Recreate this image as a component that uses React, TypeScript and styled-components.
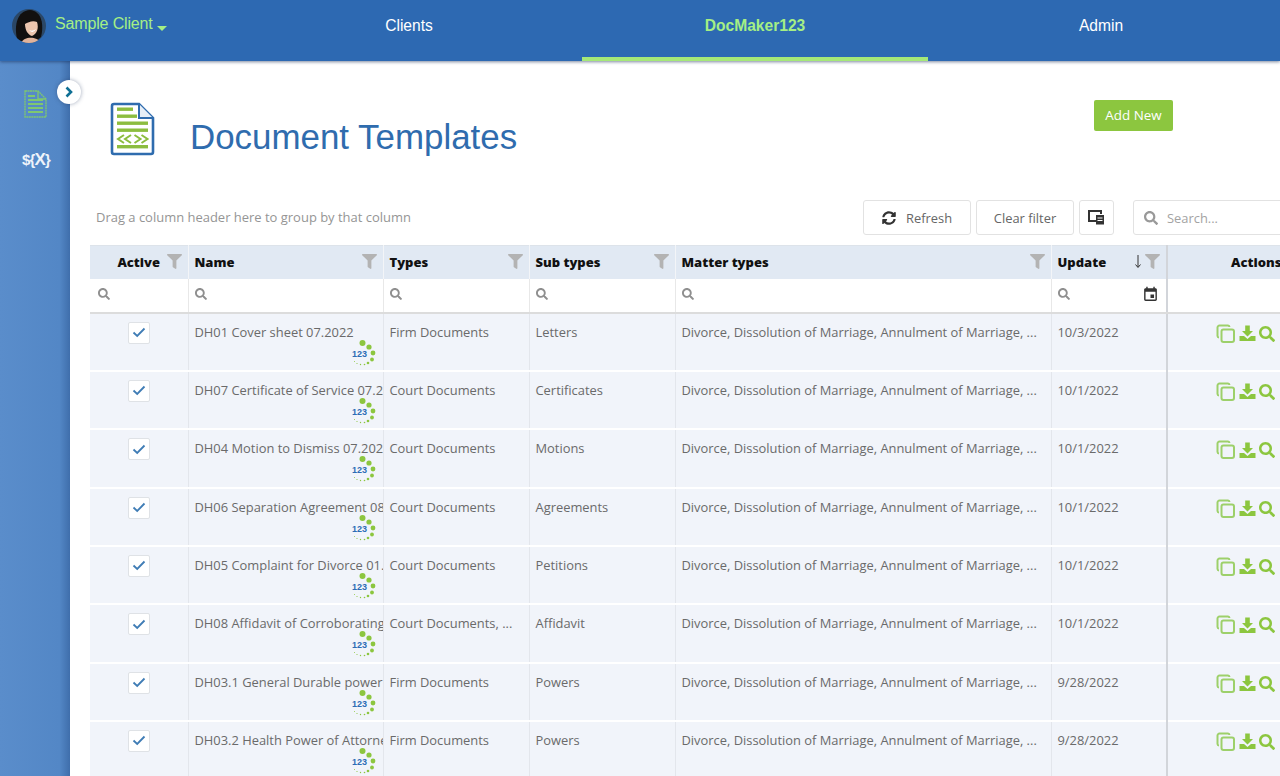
import React from 'react';
import styled, { createGlobalStyle } from 'styled-components';
import { FaFilter, FaSearch, FaSyncAlt } from 'react-icons/fa';
import { MdEvent } from 'react-icons/md';

const Global = createGlobalStyle`
  html, body { margin: 0; padding: 0; height: 100%; overflow: hidden; background: #fff; }
  #root { height: 100%; }
  * { box-sizing: border-box; }
`;

const Page = styled.div`
  width: 1280px; height: 776px; display: flex; flex-direction: column; overflow: hidden;
  font-family: "Open Sans", "Noto Sans", sans-serif; color: #666;
`;
const TopBar = styled.header`
  height: 61px; flex: none; background: #2d69b2; display: flex; position: relative; z-index: 2;
  box-shadow: 0 1px 3px rgba(20, 40, 80, .55);
`;
const Brand = styled.div`
  width: 236px; flex: none; display: flex; align-items: flex-start; padding: 9px 0 0 12px; gap: 9px;
`;
const ClientName = styled.div`
  font: 16px/30px "Liberation Sans", Arial, sans-serif; color: #a5ef85; display: flex; letter-spacing: -.15px;
`;
const Caret = styled.span`
  width: 0; height: 0; margin: 17px 0 0 4px; border: 5px solid transparent; border-bottom: 0; border-top-color: #a5ef85;
`;
const Tab = styled.div<{ $active?: boolean }>`
  width: 346px; flex: none; text-align: center; padding-top: 15px; height: 61px;
  font: ${p => (p.$active ? 700 : 400)} 15.6px/21px "Liberation Sans", Arial, sans-serif;
  color: ${p => (p.$active ? '#a5ef85' : '#fff')};
  border-bottom: 4px solid ${p => (p.$active ? '#a5e878' : 'transparent')};
`;
const Body = styled.div`
  flex: 1; display: flex; min-height: 0; position: relative;
`;
const Sidebar = styled.aside`
  width: 70px; flex: none; display: flex; flex-direction: column; align-items: center; padding-top: 29px; gap: 32px;
  background: linear-gradient(90deg, #5a8dcb 0%, #5387c6 85%, #3f6eab 100%);
`;
const VarsLabel = styled.div`
  font: 700 15px/20px "Liberation Sans", Arial, sans-serif; color: #eef3fa; letter-spacing: -.9px; margin-left: 2px;
  b { font-size: 17px; }
`;
const Toggle = styled.button`
  position: absolute; left: 57px; top: 19px; width: 24px; height: 24px; border-radius: 50%; border: 0; padding: 0;
  background: #fff; box-shadow: 0 0 4px rgba(40, 60, 100, .45); display: flex; align-items: center; justify-content: center;
`;
const Main = styled.main`
  flex: 1; min-width: 0; overflow: hidden; padding: 0 0 0 20px;
`;
const TitleRow = styled.div`
  height: 139px; display: flex; padding: 41px 107px 0 20px;
`;
const Title = styled.h1`
  margin: 15px 0 0 35px; font: 400 34.9px/40px "Liberation Sans", Arial, sans-serif; color: #2f6cae; flex: 1;
`;
const AddNew = styled.button`
  height: 31px; width: 79px; border: 0; border-radius: 2px; background: #8cc63f; color: #fff;
  font: 400 13.4px/31px "Open Sans", sans-serif; padding: 0; margin-top: -2px;
`;
const Toolbar = styled.div`
  height: 45px; display: flex; align-items: flex-start; width: 1240px;
`;
const GroupHint = styled.div`
  font-size: 12.98px; line-height: 35px; color: #959595; margin-left: 6px; width: 767px; flex: none;
`;
const ToolButton = styled.button<{ $w: number }>`
  width: ${p => p.$w}px; flex: none; height: 35px; margin-right: 5px; background: #fff; border: 1px solid #e2e2e2; border-radius: 3px;
  font: 400 12.9px "Open Sans", sans-serif; color: #666; display: flex; align-items: center; justify-content: center; gap: 10px; padding: 0;
`;
const SearchBox = styled.div`
  width: 200px; flex: none; height: 35px; margin-left: 14px; background: #fff; border: 1px solid #e2e2e2; border-radius: 3px;
  display: flex; align-items: center; gap: 9px; padding-left: 10px; font-size: 12.9px; color: #a3a3a3;
`;
const Table = styled.table`
  table-layout: fixed; width: 1255px; border-collapse: collapse; border-spacing: 0;
  font-size: 12.9px;
`;
const HeadCell = styled.th<{ $center?: boolean; $fixed?: boolean }>`
  height: 33px; background: #e1e9f3; padding: 0 6px; position: relative; color: #111; font-weight: 800; font-size: 13px;
  text-align: ${p => (p.$center ? 'center' : 'left')};
  border-right: 1px solid #f3f5f8; border-top: 1px solid #dde3ea;
  border-left: ${p => (p.$fixed ? '2px solid #d2d5da' : '0')};
`;
const HeadFilter = styled.span<{ $right?: number }>`
  position: absolute; right: ${p => p.$right ?? 6}px; top: 8px; color: #b3b3b3; display: flex;
`;
const SortMark = styled.span`
  position: absolute; right: 24px; top: 8px; display: flex; color: #333;
`;
const FilterCell = styled.td<{ $fixed?: boolean; $first?: boolean }>`
  height: 34px; padding: 0 6px 0 ${p => (p.$first ? 8 : 6)}px; background: #fff; position: relative; color: #8a8a8a;
  border-right: 1px solid #e8e8e8; border-bottom: 2px solid #dcdcdc;
  border-left: ${p => (p.$fixed ? '2px solid #d2d5da' : '0')};
`;
const FilterIcon = styled.span`
  display: flex; margin-top: -2px; color: #8f8f8f;
`;
const CalendarIcon = styled.span`
  position: absolute; right: 7px; top: 7px; display: flex; color: #333;
`;
const Row = styled.tr`
  height: 58.35px; background: #f1f4fa; border-bottom: 2px solid #fff;
`;
const Cell = styled.td<{ $fixed?: boolean; $clip?: boolean }>`
  padding: 9px 6px 0; vertical-align: top; line-height: 18px; position: relative; color: #6a6a6a;
  white-space: nowrap; overflow: hidden; text-overflow: ${p => (p.$clip ? 'clip' : 'ellipsis')};
  border-right: 1px solid #e3e6ec;
  border-left: ${p => (p.$fixed ? '2px solid #d2d5da' : '0')};
`;
const CheckCell = styled(Cell)`
  padding: 8px 0 0; text-align: center;
`;
const CheckBox = styled.span`
  display: inline-flex; width: 22px; height: 22px; background: #fff; border: 1px solid #dfe2e6; border-radius: 2px;
  align-items: center; justify-content: center;
`;
const LogoMark = styled.svg`
  position: absolute; right: 6px; top: 26px; width: 25px; height: 26px;
`;
const Actions = styled.div`
  display: flex; align-items: center; gap: 3px; padding-left: 42px; margin-top: 1px; color: #8cc63f;
`;

const LogoBadge = () => (
  <LogoMark viewBox="0 0 25 26">
    <text x="0" y="16.5" fontFamily="Liberation Sans" fontWeight="700" fontSize="9" fill="#2d6db5">123</text>
    <g fill="#8cc63f">
      <circle cx="10.5" cy="3" r="3" />
      <circle cx="17" cy="7" r="2.6" />
      <circle cx="21" cy="13" r="2.4" />
      <circle cx="20" cy="19.5" r="1.9" />
      <circle cx="16" cy="23" r="1.3" />
      <circle cx="12.5" cy="24.5" r=".8" />
      <circle cx="8.5" cy="24.5" r=".7" />
      <circle cx="5" cy="23.5" r=".6" />
      <circle cx="2.5" cy="21.5" r=".5" />
    </g>
  </LogoMark>
);

const CopyIcon = () => (
  <svg width="20" height="20" viewBox="0 0 20 20" fill="none" stroke="#9dd06a" strokeWidth="2">
    <rect x="5.5" y="5.5" width="12.5" height="12.5" rx="2" fill="#f1f4fa" />
    <path d="M3 13.5 A1.6 1.6 0 0 1 1.5 12 V3.5 A2 2 0 0 1 3.5 1.5 H12 A1.6 1.6 0 0 1 13.5 3" />
  </svg>
);
const DownloadIcon = () => (
  <svg width="17" height="17" viewBox="0 0 17 17" fill="#8cc63f">
    <path d="M6.2 0.5 H10.8 V6 H14 L8.5 11.5 L3 6 H6.2 Z" />
    <path d="M0.5 11 H5 L8.5 14 L12 11 H16.5 V16 H0.5 Z" />
  </svg>
);

const rows = [
  ['DH01 Cover sheet 07.2022', 'Firm Documents', 'Letters', '10/3/2022'],
  ['DH07 Certificate of Service 07.2022', 'Court Documents', 'Certificates', '10/1/2022'],
  ['DH04 Motion to Dismiss 07.2022', 'Court Documents', 'Motions', '10/1/2022'],
  ['DH06 Separation Agreement 08.2022', 'Court Documents', 'Agreements', '10/1/2022'],
  ['DH05 Complaint for Divorce 01.2022', 'Court Documents', 'Petitions', '10/1/2022'],
  ['DH08 Affidavit of Corroborating Witness', 'Court Documents, ...', 'Affidavit', '10/1/2022'],
  ['DH03.1 General Durable power of attorney', 'Firm Documents', 'Powers', '9/28/2022'],
  ['DH03.2 Health Power of Attorney', 'Firm Documents', 'Powers', '9/28/2022'],
];
const matter = 'Divorce, Dissolution of Marriage, Annulment of Marriage, ...';

const heads = ['Name', 'Types', 'Sub types', 'Matter types'];

export default function App() {
  return (
    <Page>
      <Global />
      <TopBar>
        <Brand>
          <svg width="34" height="34" viewBox="0 0 34 34">
            <defs><clipPath id="av"><circle cx="17" cy="17" r="17" /></clipPath></defs>
            <g clipPath="url(#av)">
              <rect width="34" height="34" fill="#2b4766" />
              <path d="M5 30 C2 16 5 2 18 1 C30 2 32 16 29 28 L24 32 H8 Z" fill="#12100f" />
              <path d="M13 15 C16 13 21 11 25 13 C27 19 25 25 20 27 C16 26 13 21 13 15 Z" fill="#ecc5ae" />
              <path d="M9 34 C12 27 25 27 29 34 Z" fill="#e0b39b" />
              <path d="M17 21 Q20.5 23 24 20 Q21 25.5 17 21 Z" fill="#fff" />
            </g>
          </svg>
          <ClientName>Sample Client<Caret /></ClientName>
        </Brand>
        <Tab>Clients</Tab>
        <Tab $active>DocMaker123</Tab>
        <Tab>Admin</Tab>
      </TopBar>
      <Body>
        <Sidebar>
          <svg width="23" height="28" viewBox="0 0 23 28" fill="none" stroke="#7fc86f" strokeWidth="1.3">
            <path d="M1 1 H14 L22 9 V27 H1 Z" strokeDasharray="2 .5" />
            <path d="M14 1 V9 H22" />
            <path d="M4 6 H11 M4 10 H19 M4 14 H19 M4 18 H19 M4 22 H19" strokeWidth="2" />
          </svg>
          <VarsLabel>{'${'}<b>X</b>{'}'}</VarsLabel>
        </Sidebar>
        <Toggle aria-label="Expand">
          <svg width="12" height="12" viewBox="0 0 12 12" fill="none" stroke="#0f6f94" strokeWidth="2.6">
            <path d="M3.5 1.5 L8 6 L3.5 10.5" />
          </svg>
        </Toggle>
        <Main>
          <TitleRow>
            <svg width="45" height="54" viewBox="0 0 45 54" fill="none">
              <path d="M2 4 A2 2 0 0 1 4 2 H29 L43 16 V50 A2 2 0 0 1 41 52 H4 A2 2 0 0 1 2 50 Z" stroke="#2f6cae" strokeWidth="2.6" fill="#fff" />
              <path d="M29 2 V16 H43" stroke="#2f6cae" strokeWidth="2" fill="#e6eef7" />
              <g fill="#8cbd3f">
                <rect x="7" y="5.5" width="16" height="3.4" />
                <rect x="7" y="12.5" width="20" height="3.4" />
                <rect x="7" y="19.5" width="31" height="3.4" />
                <rect x="7" y="26.5" width="31" height="3.4" />
                <rect x="7" y="43" width="31" height="3.4" />
              </g>
              <path d="M14 33 L8 37 L14 41 M21 33 L15 37 L21 41 M24.5 33 L30.5 37 L24.5 41 M31.5 33 L37.5 37 L31.5 41" stroke="#8cbd3f" strokeWidth="2" />
            </svg>
            <Title>Document Templates</Title>
            <AddNew>Add New</AddNew>
          </TitleRow>
          <Toolbar>
            <GroupHint>Drag a column header here to group by that column</GroupHint>
            <ToolButton $w={108}><FaSyncAlt size={14} color="#333" />Refresh</ToolButton>
            <ToolButton $w={98}>Clear filter</ToolButton>
            <ToolButton $w={35}>
              <svg width="17" height="15" viewBox="0 0 17 15" fill="none" stroke="#333" strokeWidth="2">
                <path d="M8 11 H1 V1 H13 V4" />
                <rect x="8" y="5" width="8" height="9.5" fill="#333" stroke="none" />
                <path d="M9.5 8 H14.5 M9.5 10.5 H14.5" stroke="#fff" strokeWidth="1" />
              </svg>
            </ToolButton>
            <SearchBox><FaSearch size={14} color="#999" />Search...</SearchBox>
          </Toolbar>
          <Table>
            <colgroup>
              <col width="98" /><col width="195" /><col width="146" /><col width="146" />
              <col width="376" /><col width="116" /><col width="178" />
            </colgroup>
            <thead>
              <tr>
                <HeadCell $center>Active<HeadFilter><FaFilter size={15} /></HeadFilter></HeadCell>
                {heads.map(h => (
                  <HeadCell key={h}>{h}<HeadFilter><FaFilter size={15} /></HeadFilter></HeadCell>
                ))}
                <HeadCell>
                  Update
                  <SortMark>
                    <svg width="8" height="15" viewBox="0 0 8 15" fill="none" stroke="#333" strokeWidth="1">
                      <path d="M4 1 V13 M1.5 10.5 L4 13.5 L6.5 10.5" />
                    </svg>
                  </SortMark>
                  <HeadFilter><FaFilter size={15} /></HeadFilter>
                </HeadCell>
                <HeadCell $center $fixed>Actions</HeadCell>
              </tr>
              <tr>
                {[0, 1, 2, 3, 4].map(i => (
                  <FilterCell key={i} $first={i === 0}><FilterIcon><FaSearch size={12} /></FilterIcon></FilterCell>
                ))}
                <FilterCell>
                  <FilterIcon><FaSearch size={12} /></FilterIcon>
                  <CalendarIcon><MdEvent size={17} /></CalendarIcon>
                </FilterCell>
                <FilterCell $fixed />
              </tr>
            </thead>
            <tbody>
              {rows.map(r => (
                <Row key={r[0]}>
                  <CheckCell>
                    <CheckBox>
                      <svg width="14" height="11" viewBox="0 0 14 11" fill="none" stroke="#3f7cb5" strokeWidth="1.8">
                        <path d="M1.5 5.5 L5.2 9 L12.5 1.5" />
                      </svg>
                    </CheckBox>
                  </CheckCell>
                  <Cell $clip>{r[0]}<LogoBadge /></Cell>
                  <Cell>{r[1]}</Cell>
                  <Cell>{r[2]}</Cell>
                  <Cell>{matter}</Cell>
                  <Cell>{r[3]}</Cell>
                  <Cell $fixed>
                    <Actions>
                      <CopyIcon />
                      <DownloadIcon />
                      <FaSearch size={16} />
                    </Actions>
                  </Cell>
                </Row>
              ))}
            </tbody>
          </Table>
        </Main>
      </Body>
    </Page>
  );
}
